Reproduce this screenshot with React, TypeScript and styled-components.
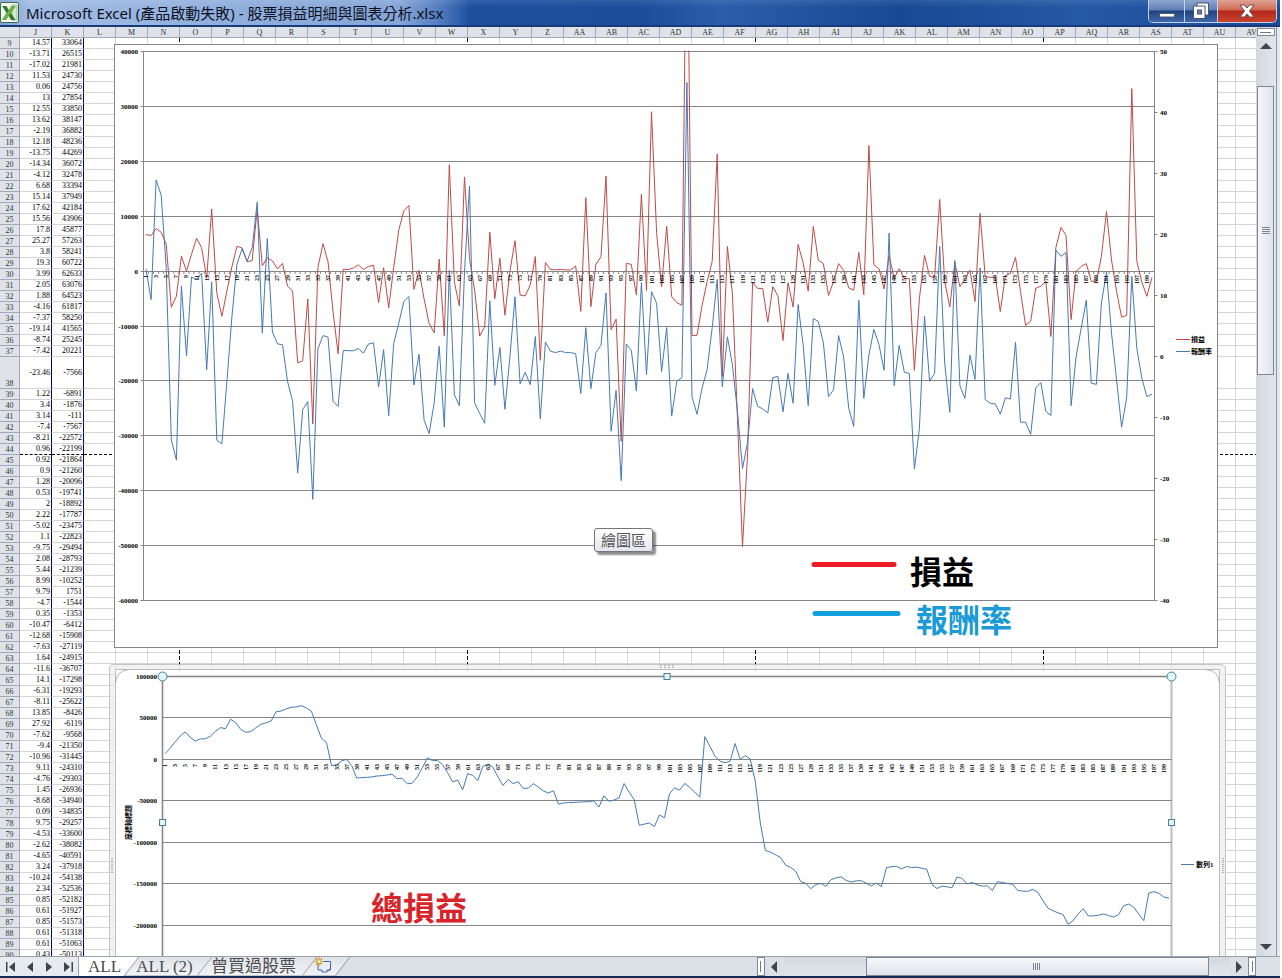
import React from "react";
import styled, { createGlobalStyle, css } from "styled-components";

const SANS = '"Noto Sans", "Noto Sans CJK TC", sans-serif';
const SERIF = '"Liberation Serif", "Noto Sans CJK TC", serif';
const GRID = "#d3d5d8";
const NAVY = "#00006a";
const AXIS = "#868686";
const RED = "#be4b48";
const BLUE = "#457ab4";

/* ---------- data ---------- */

type Row = [rate: number, total: number];

/* return rate and running total of each trade, from sheet row 9 on */
const rows: Row[] = [
  [14.57, 33064], [-13.71, 26515], [-17.02, 21981], [11.53, 24730], [0.06, 24756],
  [13, 27854], [12.55, 33850], [13.62, 38147], [-2.19, 36882], [12.18, 48236],
  [-13.75, 44269], [-14.34, 36072], [-4.12, 32478], [6.68, 33394], [15.14, 37949],
  [17.62, 42184], [15.56, 43906], [17.8, 45877], [25.27, 57263], [3.8, 58241],
  [19.3, 60722], [3.99, 62633], [2.05, 63076], [1.88, 64523], [-4.16, 61817],
  [-7.37, 58250], [-19.14, 41565], [-8.74, 25245], [-7.42, 20221], [-23.46, -7566],
  [1.22, -6891], [3.4, -1876], [3.14, -111], [-7.4, -7567], [-8.21, -22572],
  [0.96, -22199], [0.92, -21864], [0.9, -21260], [1.28, -20096], [0.53, -19741],
  [2, -18892], [2.22, -17787], [-5.02, -23475], [1.1, -22823], [-9.75, -29494],
  [2.08, -28793], [5.44, -21239], [8.99, -10252], [9.79, 1751], [-4.7, -1544],
  [0.35, -1353], [-10.47, -6412], [-12.68, -15908], [-7.63, -27119], [1.64, -24915],
  [-11.6, -36707], [14.1, -17298], [-6.31, -19293], [-8.11, -25622], [13.85, -8426],
  [27.92, -6119], [-7.62, -9568], [-9.4, -21350], [-10.96, -31445], [9.11, -24310],
  [-4.76, -29303], [1.45, -26936], [-8.68, -34940], [0.09, -34835], [9.75, -29257],
  [-4.53, -33600], [-2.62, -38082], [-4.65, -40591], [3.24, -37918], [-10.24, -54138],
  [2.34, -52536], [0.85, -52182], [0.61, -51927], [0.85, -51573], [0.61, -51318],
  [0.61, -51063], [0.43, -50113],
];

const firstTotals = [6700, 13200, 21000, 28100];
const firstRates = [14.3, 9.3, 28.9, 26.4];

const laterProfits = [
  -7300, 13400, -6440, 1260, 2680, 17350, -10630, -8720, -30960, 1450, 1260, -4340, 14020,
  -3500, 29050, 7050, -2800, 8220, -4650, -5700, -6190, 72900, -11680, -11680, -6190, -1880,
  1820, 21350, -19130, 4530, -4040, -27000, -50120, -33200, -2060, -3110, -3110, -9270,
  -2800, -4470, -12600, -2060, -6500, 4900, 1510, -3600, 8180, 2000, 1400, -4400, -1880,
  1400, 180, -3000, -3450, 3450, -4240, 22900, 1210, 480, -3200, 2900, -1270, 480, -1270,
  -1330, -18060, -5000, 2900, -910, -1150, 13090, -1880, -6500, 1580, -2790, -1450, 180,
  -5500, 10550, -970, -1090, -1090, -7330, -790, -360, 2550, -3700, -9880, -9090, -3090,
  -2730, -1820, -11880, 4360, 8000, 6550, -8790, -60, 910, 1400, -1820, -1820, 2670, 10910,
  2060, -3700, -8360, -8060, 33270, 1820, -2000, -4550, -1090,
];

const laterRates = [
  -6.1, 4.7, -5.3, 0.6, 1.8, 10.4, -12.3, -5.6, -20.4, 2, 1, -5.7, 12.1, -3, 10.6, 8.7, -2.5,
  4.7, -9.8, -4.1, -3.5, 44.9, -6.6, -9.5, -5.2, -2.2, 4.7, 12.6, -5, 3.2, -1.4, -9.1, -18.4,
  -14.1, -5.3, -8.2, -8.6, -9.3, -3.5, -3.3, -9.1, -2.8, -7.7, 8.5, 1.8, -8.1, 6.2, 5.7, 2.2,
  -6.6, -5.5, 3.4, -0.1, -8.5, -11.5, 9.2, -6.9, 0.2, 4.4, 1.9, -2.3, 20.2, -4.8, 1.8, -2.6,
  -2.8, -18.5, -11.8, 6.6, -4.1, -2.8, 18, -1.1, -9.2, 15.7, -4.8, -6.9, 0.2, -3.8, 14.5,
  -7.1, -7.7, -7.8, -9.5, -6.8, -7, 2.3, -10.8, -10.8, -12.8, -5.2, -4.3, -9, -9.7, 17.4,
  16.4, 17, -8.1, -0.1, 4.6, 9.2, -4.4, -4.6, 8.7, 13.8, 3.8, -3.9, -11.6, -6.8, 13.1, 1.3,
  -3.6, -6.6, -6.2,
];

const rates = [...firstRates, ...rows.map((r) => r[0]), ...laterRates];
const totals = [...firstTotals, ...rows.map((r) => r[1])];
laterProfits.forEach((p) => totals.push(totals[totals.length - 1] + p));
const profits = totals.map((t, i) => (i === 0 ? t : t - totals[i - 1]));

const letters = "ABCDEFGHIJKLMNOPQRSTUVWXYZ".split("");
const columns = [...letters.slice(9), ...letters.slice(0, 22).map((l) => "A" + l)];

/* ---------- window ---------- */

const Global = createGlobalStyle`
  html, body, #root { height: 100%; }
  body { margin: 0; background: #fff; overflow: hidden; }
  * { box-sizing: border-box; }
  button { font: inherit; color: inherit; padding: 0; margin: 0; border: 0; background: none; }
`;

const Window = styled.div`
  display: flex;
  flex-direction: column;
  height: 100vh;
  margin-right: 2px;
  overflow: hidden;
  font-family: ${SANS};
  background: #dce1e8;
`;

const TitleBar = styled.header`
  flex: none;
  display: flex;
  align-items: center;
  height: 27px;
  border-bottom: 2px solid #173a78;
  background:
    linear-gradient(rgba(255, 255, 255, 0.1), rgba(255, 255, 255, 0) 30%),
    linear-gradient(90deg, #7b9fd4 0, #a3bce4 30px, #8faedd 240px, #86a6d8 400px, #5079bd 442px, #1d4f9f 470px, #1b4d9c 640px, #2a5dab 720px, #174994 900px, #2459a6 1080px, #1a4b99);
`;

const AppIcon = styled.svg`
  flex: none;
  width: 20px;
  height: 21px;
`;

const Title = styled.h1`
  flex: 1;
  margin: 0 0 0 6px;
  font-size: 15px;
  line-height: 24px;
  font-weight: 400;
  color: #0b1020;
  white-space: nowrap;
`;

const WindowButtons = styled.div`
  align-self: flex-start;
  display: flex;
  height: 23px;
  margin-right: 3px;
  border: 1px solid #c3d1ea;
  border-top: 0;
  border-radius: 0 0 5px 5px;
  overflow: hidden;
`;

const WindowButton = styled.button<{ $w: number; $close?: boolean }>`
  display: flex;
  align-items: center;
  justify-content: center;
  width: ${(p) => p.$w}px;
  background: linear-gradient(#8fa6ce, #5f7fb6 45%, #1f427f 50%, #3f69ac);
  & + & {
    border-left: 1px solid #c3d1ea;
  }
  ${(p) =>
    p.$close &&
    css`
      background: linear-gradient(#e0a294, #cf6a55 45%, #b3281a 50%, #c8452f);
    `}
`;

const Workspace = styled.main`
  flex: 1;
  min-height: 0;
  display: flex;
  border-right: 3px solid #dfe8f3;
`;

const Canvas = styled.div`
  position: relative;
  flex: 1;
  min-width: 0;
  overflow: hidden;
  background: #fff;
`;

/* ---------- sheet ---------- */

const Sheet = styled.table`
  width: 1268px;
  table-layout: fixed;
  border-collapse: separate;
  border-spacing: 0;
  font-family: ${SERIF};
  font-size: 8px;
  line-height: 10px;
  color: #000;
  th, td {
    padding: 0;
    border-right: 1px solid ${GRID};
    border-bottom: 1px solid ${GRID};
    white-space: nowrap;
  }
`;

const HeadCell = styled.th`
  && {
    height: 11px;
    padding-top: 2px;
    border-color: #a3a9b2;
    background: #dfe3e9;
    font-weight: 400;
    line-height: 8px;
    color: #333;
    vertical-align: bottom;
  }
`;

const ValueCell = styled.td<{ $break: boolean }>`
  && {
    padding-right: 1px;
    border-right-color: ${NAVY};
    text-align: right;
    ${(p) => p.$break && "border-bottom: 1px dashed #000;"}
  }
`;

const BlankCell = styled.td<{ $break: boolean }>`
  && {
    ${(p) => p.$break && "border-bottom: 1px dashed #000;"}
    background: repeating-linear-gradient(90deg, transparent 0 31px, ${GRID} 31px 32px);
  }
`;

const SheetRow = styled.tr<{ $tall: boolean }>`
  height: ${(p) => (p.$tall ? 32 : 11)}px;
`;

const PageBreak = styled.div<{ $x: number }>`
  position: absolute;
  left: ${(p) => p.$x}px;
  top: 11px;
  bottom: 0;
  width: 1px;
  background: repeating-linear-gradient(#000 0 4px, #fff 4px 6px);
`;

const ProfitFigure = styled.svg`
  position: absolute;
  left: 114px;
  top: 17px;
  width: 1104px;
  height: 604px;
`;

const TotalFigure = styled.svg`
  position: absolute;
  left: 109px;
  top: 637px;
  width: 1117px;
  height: 330px;
`;

const Tip = styled.div`
  position: absolute;
  left: 594px;
  top: 501px;
  padding: 0 6px;
  border: 1px solid #767676;
  border-radius: 3px;
  background: linear-gradient(#fff, #e4e5f0);
  box-shadow: 3px 3px 2px rgba(0, 0, 0, 0.45);
  font-size: 15px;
  line-height: 22px;
  color: #575757;
`;

/* ---------- scroll bars ---------- */

const VScroll = styled.div`
  flex: none;
  display: flex;
  flex-direction: column;
  align-items: center;
  width: 21px;
  padding: 1px 2px 0 1px;
  border-right: 1px solid #8d96a3;
  background: linear-gradient(90deg, #d3d8e0, #e2e6ec);
`;

const SplitHandle = styled.div<{ $vertical?: boolean }>`
  flex: none;
  width: ${(p) => (p.$vertical ? "8px" : "18px")};
  height: ${(p) => (p.$vertical ? "19px" : "8px")};
  border: 1px solid #7e8794;
  background: #fff;
  display: flex;
  align-items: center;
  justify-content: center;
  &::after {
    content: "";
    width: ${(p) => (p.$vertical ? "1px" : "11px")};
    height: ${(p) => (p.$vertical ? "11px" : "1px")};
    background: #6f7884;
  }
`;

const ArrowButton = styled.button`
  flex: none;
  display: flex;
  align-items: center;
  justify-content: center;
  width: 19px;
  height: 19px;
`;

const VTrack = styled.div`
  flex: 1;
  width: 100%;
  padding-top: 31px;
`;

const VThumb = styled.div`
  display: flex;
  align-items: center;
  justify-content: center;
  height: 34%;
  border: 1px solid #7f8794;
  background: linear-gradient(90deg, #f6f7fa, #dfe3ea);
`;

const Grip = styled.div<{ $across?: boolean }>`
  width: 8px;
  height: 7px;
  background: repeating-linear-gradient(${(p) => (p.$across ? "90deg" : "180deg")}, #7d8590 0 1px, transparent 1px 2px);
`;

const Bottom = styled.footer`
  flex: none;
  display: flex;
  height: 22px;
  border-top: 1px solid #9aa1ab;
  border-bottom: 2px solid #14294f;
  background: #dce1e8;
`;

const NavButtons = styled.nav`
  flex: none;
  display: flex;
  width: 79px;
  padding-left: 1px;
  border-right: 1px solid #9aa1ab;
  background: #e7eaef;
`;

const Tabs = styled.div`
  flex: 1;
  min-width: 0;
  display: flex;
  overflow: hidden;
  font-family: ${SERIF};
  font-size: 17px;
  line-height: 18px;
  color: #4d4d4d;
`;

const Tab = styled.button<{ $w: number; $active?: boolean }>`
  position: relative;
  flex: none;
  z-index: ${(p) => (p.$active ? 1 : 0)};
  width: ${(p) => p.$w}px;
  height: 19px;
  padding-right: ${(p) => (p.$active ? 2 : 8)}px;
  white-space: nowrap;
  &::before {
    content: "";
    position: absolute;
    z-index: -1;
    inset: 0 0 0 ${(p) => (p.$active ? "-20px" : "0")};
    transform: skewX(-38deg);
    border-right: 1px solid #9097a1;
    border-bottom: ${(p) => (p.$active ? "0" : "1px solid #c2c7ce")};
    background: ${(p) => (p.$active ? "#fff" : "linear-gradient(#dfe3e8, #f1f3f6)")};
  }
`;

const HScroll = styled.div`
  flex: none;
  display: flex;
  align-items: center;
  width: 39%;
`;

const HTrack = styled.div`
  flex: 1;
  display: flex;
  height: 19px;
  padding: 0 20px 0 82px;
  background: linear-gradient(#d3d8e0, #e2e6ec);
`;

const HThumb = styled.div`
  flex: 1;
  display: flex;
  align-items: center;
  justify-content: center;
  border: 1px solid #7f8794;
  background: linear-gradient(#f6f7fa, #dfe3ea);
`;

const Corner = styled.div`
  flex: none;
  width: 24px;
`;

/* ---------- charts ---------- */

const AxisText = styled.text`
  font-family: ${SERIF};
  font-size: 7px;
  font-weight: 700;
`;

const CategoryText = styled(AxisText)`
  font-size: 6px;
`;

const Note = styled.text`
  font-family: ${SANS};
  font-size: 32px;
  font-weight: 700;
`;

const Series = styled.polyline`
  fill: none;
  stroke-width: 1;
  stroke-linejoin: round;
`;

const half = (n: number) => Math.floor(n) + 0.5;

const points = (data: number[], left: number, step: number, zero: number, unit: number) =>
  data.map((v, i) => `${(left + (i + 0.5) * step).toFixed(1)},${(zero - v * unit).toFixed(1)}`).join(" ");

const Categories = ({ left, step, y }: { left: number; step: number; y: number }) => (
  <>
    {Array.from({ length: 100 }, (_, i) => {
      const x = left + (i * 2 + 0.5) * step + 2;
      return (
        <CategoryText key={i} x={x} y={y} textAnchor="end" transform={`rotate(-90 ${x} ${y})`}>
          {i * 2 + 1}
        </CategoryText>
      );
    })}
  </>
);

const ProfitChart = () => {
  const left = 29.5;
  const right = 1040.5;
  const top = 7.5;
  const bottom = 556.5;
  const step = (right - left) / 200;
  const zero = 227.3;
  return (
    <ProfitFigure role="img" aria-label="損益與報酬率">
      <clipPath id="plot">
        <rect x={left} y={top - 1} width={right - left} height={bottom - top} />
      </clipPath>
      <rect x="0.5" y="0.5" width="1103" height="603" fill="#fff" stroke={AXIS} />
      {Array.from({ length: 11 }, (_, i) => {
        const y = half(top + i * 54.9);
        return (
          <g key={i}>
            <line x1={left - 3} x2={right} y1={y} y2={y} stroke={AXIS} />
            <AxisText x="24" y={y + 2} textAnchor="end">{40000 - i * 10000}</AxisText>
          </g>
        );
      })}
      {Array.from({ length: 10 }, (_, i) => {
        const y = half(top + i * 61);
        return (
          <g key={i}>
            <line x1={right} x2={right + 3} y1={y} y2={y} stroke={AXIS} />
            <AxisText x="1046" y={y + 2}>{50 - i * 10}</AxisText>
          </g>
        );
      })}
      <path d={`M${left} ${top}V${bottom}M${right} ${top}V${bottom}`} stroke={AXIS} />
      <path
        d={Array.from({ length: 201 }, (_, i) => `M${(left + i * step).toFixed(1)} 227v3`).join("")}
        stroke={AXIS}
      />
      <g clipPath="url(#plot)">
        <Series stroke={RED} points={points(profits, left, step, zero, 0.00549)} />
        <Series stroke={BLUE} points={points(rates, left, step, 312.3, 6.1)} />
      </g>
      <Categories left={left} step={step} y={231} />
      <line x1="1062" x2="1076" y1="295.5" y2="295.5" stroke={RED} />
      <AxisText x="1077" y="298">損益</AxisText>
      <line x1="1062" x2="1076" y1="307.5" y2="307.5" stroke={BLUE} />
      <AxisText x="1077" y="310">報酬率</AxisText>
      <line x1="700" x2="780" y1="520.5" y2="520.5" stroke="#ec1c24" strokeWidth="5" strokeLinecap="round" />
      <Note x="796" y="540" fill="#000">損益</Note>
      <line x1="701" x2="784" y1="569.5" y2="569.5" stroke="#10a0dc" strokeWidth="5" strokeLinecap="round" />
      <Note x="802" y="588" fill="#1b9ad6">報酬率</Note>
    </ProfitFigure>
  );
};

const Dots = ({ x, y, across }: { x: number; y: number; across?: boolean }) => (
  <g fill="#b4b4b4">
    {[0, 1, 2, 3].map((i) => (
      <React.Fragment key={i}>
        <rect x={across ? x + i * 4 : x} y={across ? y : y + i * 4} width="2" height="1" />
        <rect x={across ? x + i * 4 : x} y={across ? y + 2 : y + 2 + i * 4} width="2" height="1" />
      </React.Fragment>
    ))}
  </g>
);

const TotalChart = () => {
  const left = 53.5;
  const right = 1062.5;
  const step = (right - left) / 200;
  return (
    <TotalFigure role="img" aria-label="總損益">
      <path
        d="M0.5 340V5Q0.500 0.500 5 0.500H1111Q1116.500 0.500 1116.500 5V340H1110.500V14Q1110.500 5.500 1102 5.500H15Q6.500 5.500 6.500 14V340Z"
        fill="#ededed"
        fillOpacity="0.75"
        stroke="#c4c4c4"
      />
      <path d="M6.500 340V5.500H1110.500V340" fill="#fff" stroke="#bdbdbd" />
      <path d="M6.500 20Q7 6 21 5.500M1096 5.500Q1110 6 1110.500 20" fill="none" stroke="#b5b5b5" />
      <Dots x={551} y={1} across />
      <Dots x={2} y={194} />
      <Dots x={1113} y={194} />
      <path d={`M${left} 320V12.500H${right}V320`} fill="none" stroke="#bcbcbc" strokeWidth="2" />
      {Array.from({ length: 7 }, (_, i) => {
        const y = half(12.2 + i * 41.5);
        return (
          <g key={i}>
            <line x1={left} x2={right} y1={y} y2={y} stroke={AXIS} />
            <AxisText x="48" y={y + 2} textAnchor="end">{100000 - i * 50000}</AxisText>
          </g>
        );
      })}
      <line x1={left} x2={left} y1="12" y2="320" stroke={AXIS} />
      <Series stroke={BLUE} points={points(totals, left, step, 95.3, 0.00083)} />
      <Categories left={left} step={step} y={100} />
      <AxisText x="22" y="176" transform="rotate(-90 22 176)">座標軸標題</AxisText>
      <g fill="#dff5f8" stroke="#4d7f94">
        <circle cx={left} cy="12.5" r="4.5" />
        <circle cx={right} cy="12.5" r="4.5" />
        <rect x="555" y="9.5" width="6" height="6" />
        <rect x="50.5" y="155.5" width="6" height="6" />
        <rect x="1059.5" y="155.5" width="6" height="6" />
      </g>
      <line x1="1072" x2="1085" y1="200.5" y2="200.5" stroke={BLUE} />
      <AxisText x="1087" y="203">數列1</AxisText>
      <Note x="262" y="256" fill="#d8232a">總損益</Note>
    </TotalFigure>
  );
};

const Arrow = ({ d }: { d: string }) => (
  <svg width="12" height="12" aria-hidden="true">
    <path d={d} fill="#3f454d" />
  </svg>
);

const sheetNav = [
  { label: "第一張", d: "M1 1H2.500V11H1ZM10 1V11L4 6Z" },
  { label: "上一張", d: "M9 1V11L3 6Z" },
  { label: "下一張", d: "M3 1V11L9 6Z" },
  { label: "最後一張", d: "M2 1V11L8 6ZM9.500 1H11V11H9.500Z" },
];

export default function App() {
  return (
    <Window>
      <Global />
      <TitleBar>
        <AppIcon viewBox="0 0 20 21" aria-hidden="true">
          <rect x="0.5" y="0.5" width="18" height="20" rx="1.500" fill="#f4f8f1" stroke="#3c6b3f" />
          <path d="M12 3H17V18H12Z" fill="#d5e6cc" stroke="#9cbf93" />
          <path d="M2 4H6.500L9 8.500L11.500 4H15.500L11 11L15.500 18H11L8.500 13.500L6 18H2L6.500 11Z" fill="#2c7a34" />
          <path d="M11.500 4H15.500L6 18H2Z" fill="#6cb33f" />
        </AppIcon>
        <Title>Microsoft Excel (產品啟動失敗) - 股票損益明細與圖表分析.xlsx</Title>
        <WindowButtons>
          <WindowButton $w={35} aria-label="最小化">
            <svg width="18" height="16">
              <rect x="1.500" y="10.500" width="15" height="3.500" fill="#fff" stroke="#4b5a78" />
            </svg>
          </WindowButton>
          <WindowButton $w={33} aria-label="往下還原">
            <svg width="20" height="20">
              <path d="M6 2H17.500V14H6Z" fill="#fff" stroke="#46536e" />
              <path d="M2.500 5H14V17.500H2.500Z" fill="#fff" stroke="#46536e" />
              <rect x="6.500" y="9" width="4" height="4" fill="#6f86b0" stroke="#46536e" />
            </svg>
          </WindowButton>
          <WindowButton $w={59} $close aria-label="關閉">
            <svg width="18" height="16">
              <path
                d="M2 2H6.500L9 5L11.500 2H16L11.500 8L16 14H11.500L9 11L6.500 14H2L6.500 8Z"
                fill="#fff"
                stroke="#6c4a4a"
              />
            </svg>
          </WindowButton>
        </WindowButtons>
      </TitleBar>

      <Workspace>
        <Canvas>
          <Sheet>
            <colgroup>
              <col style={{ width: 20 }} />
              {columns.map((c) => (
                <col key={c} style={{ width: 32 }} />
              ))}
            </colgroup>
            <thead>
              <tr>
                <HeadCell aria-label="全選" />
                {columns.map((c) => (
                  <HeadCell key={c} scope="col">{c}</HeadCell>
                ))}
              </tr>
            </thead>
            <tbody>
              {rows.map(([rate, total], i) => {
                const n = i + 9;
                const isBreak = n === 44;
                return (
                  <SheetRow key={n} $tall={n === 38}>
                    <HeadCell scope="row">{n}</HeadCell>
                    <ValueCell $break={isBreak}>{rate}</ValueCell>
                    <ValueCell $break={isBreak}>{total}</ValueCell>
                    <BlankCell $break={isBreak} colSpan={37} />
                  </SheetRow>
                );
              })}
            </tbody>
          </Sheet>
          {[179, 467, 755, 1043].map((x) => (
            <PageBreak key={x} $x={x} />
          ))}
          <ProfitChart />
          <TotalChart />
          <Tip role="tooltip">繪圖區</Tip>
        </Canvas>
        <VScroll>
          <SplitHandle />
          <ArrowButton aria-label="向上捲動">
            <Arrow d="M6 3L12 9H0Z" />
          </ArrowButton>
          <VTrack>
            <VThumb>
              <Grip />
            </VThumb>
          </VTrack>
          <ArrowButton aria-label="向下捲動">
            <Arrow d="M0 3H12L6 9Z" />
          </ArrowButton>
        </VScroll>
      </Workspace>

      <Bottom>
        <NavButtons aria-label="工作表">
          {sheetNav.map((b) => (
            <ArrowButton key={b.label} aria-label={b.label}>
              <Arrow d={b.d} />
            </ArrowButton>
          ))}
        </NavButtons>
        <Tabs>
          <Tab $w={53} $active>ALL</Tab>
          <Tab $w={73}>ALL (2)</Tab>
          <Tab $w={105}>曾買過股票</Tab>
          <Tab $w={33} aria-label="插入工作表">
            <svg width="18" height="17" aria-hidden="true">
              <path d="M4 4.500H16.500V13H13V15H8V13H4Z" fill="#e9effa" stroke="#4765a5" />
              <path d="M13 15L16.500 11V13Z" fill="#4765a5" />
              <path d="M5 0V9M0.500 4.500H9.500M2 1.500L8 7.500M8 1.500L2 7.500" stroke="#d99a22" strokeWidth="1.200" />
              <circle cx="5" cy="4.500" r="1.500" fill="#fff3b0" />
            </svg>
          </Tab>
        </Tabs>
        <HScroll>
          <SplitHandle $vertical />
          <ArrowButton aria-label="向左捲動">
            <Arrow d="M9 0V12L3 6Z" />
          </ArrowButton>
          <HTrack>
            <HThumb>
              <Grip $across />
            </HThumb>
          </HTrack>
          <ArrowButton aria-label="向右捲動">
            <Arrow d="M3 0V12L9 6Z" />
          </ArrowButton>
          <SplitHandle $vertical />
        </HScroll>
        <Corner />
      </Bottom>
    </Window>
  );
}
